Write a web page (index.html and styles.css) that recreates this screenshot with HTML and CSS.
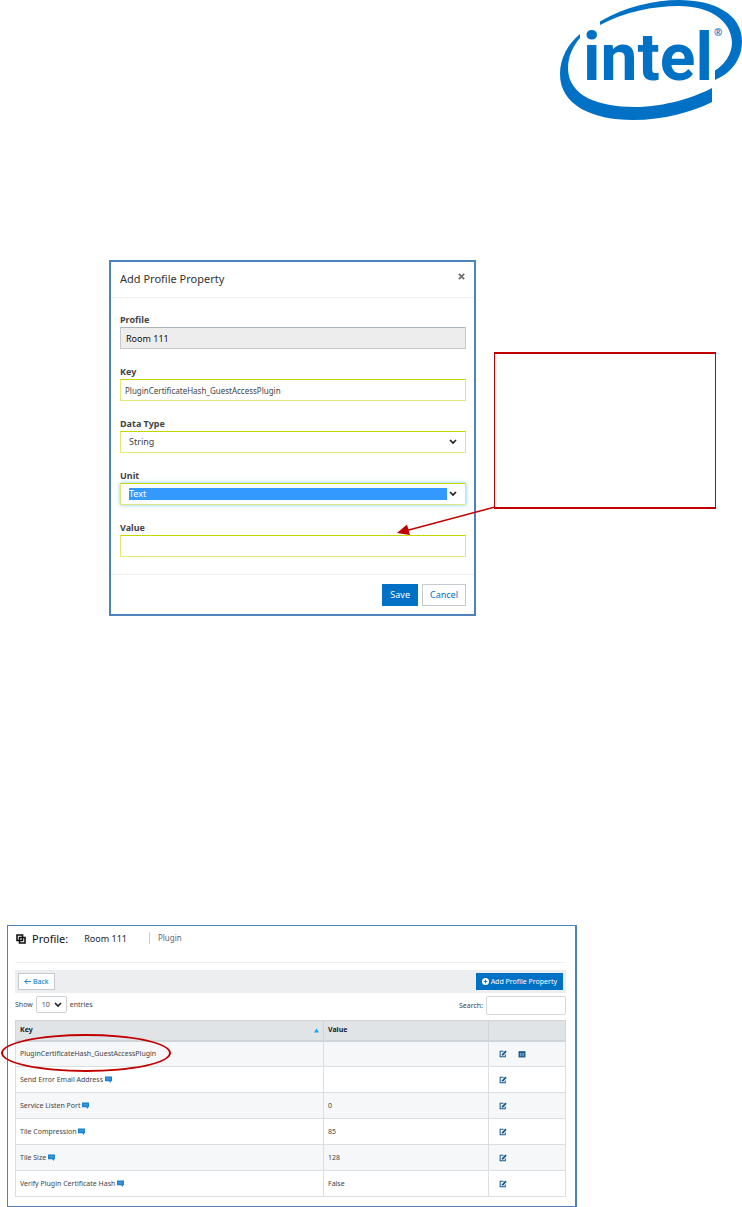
FILE: index.html
```html
<!DOCTYPE html>
<html lang="en">
<head>
    <meta charset="UTF-8">
    <meta name="viewport" content="width=device-width, initial-scale=1.0">
    <title>Add Profile Property</title>
    <link rel="stylesheet" href="styles.css">
</head>
<body>
    <!-- Shared icons -->
    <svg class="sprite" aria-hidden="true">
        <symbol id="chevron" viewBox="0 0 8 6"><path d="M1 1l3 3 3-3" fill="none" stroke="#222" stroke-width="1.7"/></symbol>
        <symbol id="edit" viewBox="0 0 14 14">
            <path d="M11 8v4H2V2h6" fill="none" stroke="currentColor" stroke-width="1.8"/>
            <path d="M5 10V7.500L11 1l2.500 2L7.500 9.500z" fill="currentColor"/>
        </symbol>
        <symbol id="trash" viewBox="0 0 14 14">
            <path d="M1 2h12v11H1z" fill="currentColor"/>
            <path d="M5 5v6M9 5v6" stroke="#c9dbe8" stroke-width="1.400"/>
        </symbol>
        <symbol id="comment" viewBox="0 0 12 12">
            <path d="M0 1h12v8h-2v3L7 9H0z" fill="#1c81cf"/>
            <path d="M2 5h8" stroke="#8ec2ea" stroke-width="1"/>
        </symbol>
    </svg>

    <header class="page-header">
        <svg class="logo" viewBox="560 0 182 120" role="img" aria-label="intel">
            <g fill="#0071c5">
                <path d="M600 21.500C624 7 655 0 679 0C714 0 742 14 742 41C742 60 731 73 715 80V70.500C724 65 732 55 732 42C731 20 709 6 679 6C653 6 624 12 600 25z"/>
                <path d="M580 34C568 44 560 58 560 74C560 105 592 120 633 120C664 120 692 112 712 102V88C695 97 665 107 635 107C598 107 569 96 568 69C568 56 573 46 580 38z"/>
            </g>
            <text class="logo-text" x="583" y="80">intel</text>
            <text class="logo-mark" x="714" y="36">®</text>
        </svg>
    </header>

    <section class="dialog-row">
        <form class="dialog">
            <div class="dialog-header">
                <h2>Add Profile Property</h2>
                <button type="button" class="close" aria-label="Close">
                    <svg viewBox="0 0 8 8"><path d="M1 1l6 6M7 1L1 7" stroke="#777" stroke-width="2.400"/></svg>
                </button>
            </div>
            <div class="dialog-body">
                <div class="form-group">
                    <label for="profile">Profile</label>
                    <input type="text" id="profile" class="readonly" value="Room 111" readonly>
                </div>
                <div class="form-group">
                    <label for="key">Key</label>
                    <input type="text" id="key" value="PluginCertificateHash_GuestAccessPlugin">
                </div>
                <div class="form-group">
                    <label for="dataType">Data Type</label>
                    <div class="select-wrap">
                        <select id="dataType"><option>String</option></select>
                        <svg class="chevron"><use href="#chevron"/></svg>
                    </div>
                </div>
                <div class="form-group">
                    <label for="unit">Unit</label>
                    <div class="select-wrap">
                        <select id="unit" class="focused"><option>Text</option></select>
                        <svg class="chevron"><use href="#chevron"/></svg>
                    </div>
                </div>
                <div class="form-group">
                    <label for="value">Value</label>
                    <input type="text" id="value">
                </div>
            </div>
            <div class="dialog-footer">
                <button type="submit" class="btn btn-primary">Save</button>
                <button type="button" class="btn">Cancel</button>
            </div>
        </form>

        <div class="callout">
            <svg class="arrow" viewBox="0 0 98 32">
                <path d="M98 1L8 25" stroke="#c00000" stroke-width="1.500"/>
                <path d="M0 27L10 18.500L13 29z" fill="#c00000"/>
            </svg>
        </div>
    </section>

    <section class="panel">
        <div class="panel-title">
            <svg class="copy" viewBox="0 0 10 10"><path d="M1 1h5.500v5.500H1z M3.500 3.500H9V9H3.500z" fill="none" stroke="#111" stroke-width="1.600"/></svg>
            <h1>Profile:</h1>
            <span class="room">Room 111</span>
            <span class="type">Plugin</span>
        </div>

        <div class="toolbar">
            <button type="button" class="btn btn-small">
                <svg class="btn-icon" viewBox="0 0 8 8"><path d="M8 4H1M4 1L1 4l3 3" fill="none" stroke="currentColor"/></svg>Back
            </button>
            <button type="button" class="btn btn-small btn-primary">
                <svg class="btn-icon" viewBox="0 0 8 8"><circle cx="4" cy="4" r="4" fill="#fff"/><path d="M4 2v4M2 4h4" stroke="#0071c5"/></svg>Add Profile Property
            </button>
        </div>

        <div class="filters">
            <label class="length">Show
                <span class="select-wrap">
                    <select><option>10</option></select>
                    <svg class="chevron"><use href="#chevron"/></svg>
                </span>
                entries
            </label>
            <label class="search">Search: <input type="text"></label>
        </div>

        <div class="table-wrap">
            <table>
                <thead>
                    <tr>
                        <th class="col-key"><span class="sorted">Key <svg viewBox="0 0 6 5"><path d="M3 0l3 5H0z" fill="#13a9ee"/></svg></span></th>
                        <th class="col-value">Value</th>
                        <th></th>
                    </tr>
                </thead>
                <tbody>
                    <tr>
                        <td>PluginCertificateHash_GuestAccessPlugin</td>
                        <td></td>
                        <td class="actions">
                            <button type="button" aria-label="Edit"><svg><use href="#edit"/></svg></button>
                            <button type="button" aria-label="Delete"><svg><use href="#trash"/></svg></button>
                        </td>
                    </tr>
                    <tr>
                        <td>Send Error Email Address <svg class="comment"><use href="#comment"/></svg></td>
                        <td></td>
                        <td class="actions"><button type="button" aria-label="Edit"><svg><use href="#edit"/></svg></button></td>
                    </tr>
                    <tr>
                        <td>Service Listen Port <svg class="comment"><use href="#comment"/></svg></td>
                        <td>0</td>
                        <td class="actions"><button type="button" aria-label="Edit"><svg><use href="#edit"/></svg></button></td>
                    </tr>
                    <tr>
                        <td>Tile Compression <svg class="comment"><use href="#comment"/></svg></td>
                        <td>85</td>
                        <td class="actions"><button type="button" aria-label="Edit"><svg><use href="#edit"/></svg></button></td>
                    </tr>
                    <tr>
                        <td>Tile Size <svg class="comment"><use href="#comment"/></svg></td>
                        <td>128</td>
                        <td class="actions"><button type="button" aria-label="Edit"><svg><use href="#edit"/></svg></button></td>
                    </tr>
                    <tr>
                        <td>Verify Plugin Certificate Hash <svg class="comment"><use href="#comment"/></svg></td>
                        <td>False</td>
                        <td class="actions"><button type="button" aria-label="Edit"><svg><use href="#edit"/></svg></button></td>
                    </tr>
                </tbody>
            </table>
            <div class="highlight"></div>
        </div>
    </section>
</body>
</html>
```
FILE: styles.css
```css
* {
    margin: 0;
    padding: 0;
    box-sizing: border-box;
}

body {
    font-family: "Noto Sans", "Open Sans", sans-serif;
    font-size: 8px;
    line-height: 12px;
    color: #444;
    background: #fff;
}

button,
input,
select {
    font: inherit;
    color: inherit;
}

svg {
    display: block;
}

.sprite {
    position: absolute;
    width: 0;
    height: 0;
}

/* Logo */
.page-header {
    display: flex;
    justify-content: flex-end;
    margin-bottom: 140px;
}

.logo {
    width: 182px;
    height: 120px;
}

.logo-text {
    font-family: Roboto, sans-serif;
    font-size: 66px;
    font-weight: 700;
    fill: #0071c5;
}

.logo-mark {
    font-size: 10px;
    font-weight: 700;
    fill: #0071c5;
}

/* Dialog and callout */
.dialog-row {
    display: grid;
    grid-template-columns: 367fr 222fr;
    column-gap: 18px;
    align-items: start;
    padding: 0 26px 0 109px;
    margin-bottom: 309px;
}

.dialog {
    border: 2px solid #4f81bd;
    background: #fff;
}

.dialog-header {
    display: flex;
    justify-content: space-between;
    padding: 8px 8px 10px 9px;
    border-bottom: 1px solid #eee;
}

.dialog-header h2 {
    font-size: 11px;
    line-height: 17px;
    font-weight: 400;
    color: #333;
}

.close {
    width: 8px;
    height: 12px;
    border: 0;
    background: none;
}

.close svg {
    width: 7px;
    height: 7px;
}

.dialog-body {
    padding: 15px 8px 1px 9px;
}

.form-group {
    margin-bottom: 16px;
}

.form-group label {
    display: block;
    font-size: 9px;
    line-height: 14px;
    font-weight: 700;
}

.form-group input,
.form-group select {
    display: block;
    width: 100%;
    height: 22px;
    padding: 0 4px;
    border: 1px solid;
    border-color: #c4d600 #dfe878 #dfe878;
    border-radius: 0;
    background: #fff;
    outline: none;
}

.form-group .readonly {
    font-size: 9px;
    padding: 0 5px;
    color: #111;
    border-color: #aab5bb #c4cacd #c4cacd;
    background: #ededed;
}

.select-wrap {
    position: relative;
}

.select-wrap select {
    appearance: none;
}

.form-group select {
    font-size: 9px;
    padding: 4px 18px 4px 8px;
}

.form-group .focused {
    color: #fff;
    background: linear-gradient(#39f, #39f) content-box, #fff;
    box-shadow: 0 0 4px #7ccdf5;
}

.chevron {
    position: absolute;
    top: 50%;
    right: 9px;
    width: 8px;
    height: 6px;
    margin-top: -3px;
    pointer-events: none;
}

.dialog-footer {
    display: flex;
    justify-content: flex-end;
    gap: 4px;
    padding: 9px 8px 8px;
    border-top: 1px solid #eee;
}

.btn {
    display: flex;
    align-items: center;
    height: 22px;
    padding: 0 7px;
    font-size: 9px;
    color: #0071c5;
    border: 1px solid #c4cacd;
    background: #fff;
}

.btn-primary {
    color: #fff;
    border-color: #0071c5;
    background: #0071c5;
}

.callout {
    position: relative;
    height: 157px;
    margin-top: 92px;
    border: solid #c00000;
    border-width: 2px 1px;
}

.arrow {
    position: absolute;
    right: 100%;
    top: 152px;
    width: 98px;
    height: 32px;
}

/* Profile panel */
.panel {
    margin: 0 165px 0 7px;
    padding: 6px 9px 9px 7px;
    border: solid #4f81bd;
    border-width: 1px 2px 2px 1px;
    font-size: 7px;
}

.panel-title {
    display: flex;
    align-items: flex-start;
    height: 31px;
    margin-bottom: 7px;
    border-bottom: 1px solid #f0f0f0;
}

.panel-title .copy {
    width: 10px;
    height: 10px;
    margin: 2px 6px 0 1px;
}

.panel-title h1 {
    font-size: 11px;
    line-height: 14px;
    font-weight: 400;
    color: #111;
}

.room {
    margin-left: 16px;
    font-size: 9px;
    line-height: 14px;
    color: #222;
}

.type {
    margin-left: 22px;
    padding-left: 8px;
    border-left: 1px solid #ccc;
    font-size: 8px;
    color: #666;
}

.toolbar {
    display: flex;
    justify-content: space-between;
    padding: 3px;
    background: #edeef0;
}

.btn-small {
    height: 17px;
    padding: 0 5px;
    font-size: 7px;
}

.btn-icon {
    width: 7px;
    height: 7px;
    margin-right: 2px;
}

.filters {
    display: flex;
    justify-content: space-between;
    padding: 3px 0 5px;
}

.length,
.search {
    display: flex;
    align-items: center;
    gap: 3px;
}

.length {
    height: 17px;
}

.length select {
    display: block;
    width: 31px;
    height: 17px;
    padding-left: 5px;
    border: 1px solid #ccd1d5;
    border-radius: 2px;
    background: #fff;
}

.length .chevron {
    right: 5px;
}

.search input {
    width: 80px;
    height: 19px;
    border: 1px solid #d5d8da;
    border-radius: 2px;
}

.table-wrap {
    position: relative;
}

table {
    width: 100%;
    table-layout: fixed;
    border-collapse: collapse;
    border: 1px solid #dcdfe2;
}

th,
td {
    height: 26px;
    padding: 0 4px;
    text-align: left;
    border: 1px solid #dcdfe2;
}

th {
    height: 20px;
    font-weight: 700;
    color: #222;
    background: #e0e4e7;
    border-color: #d0d5d9;
    border-bottom-width: 2px;
}

.col-key {
    width: 56%;
}

.col-value {
    width: 30%;
}

.sorted {
    display: flex;
    justify-content: space-between;
    align-items: center;
}

.sorted svg {
    width: 5px;
    height: 5px;
}

tbody tr:nth-child(odd) {
    background: #f6f7f9;
}

.comment {
    display: inline-block;
    width: 7px;
    height: 7px;
    vertical-align: -1px;
}

.actions {
    padding-left: 10px;
}

.actions button {
    display: inline-block;
    margin-right: 9px;
    border: 0;
    background: none;
    color: #1b5a8e;
    vertical-align: middle;
}

.actions svg {
    width: 8px;
    height: 8px;
}

.highlight {
    position: absolute;
    top: 14px;
    left: -14px;
    width: 170px;
    height: 38px;
    border: 2px solid #c00000;
    border-radius: 50%;
    pointer-events: none;
}
```
